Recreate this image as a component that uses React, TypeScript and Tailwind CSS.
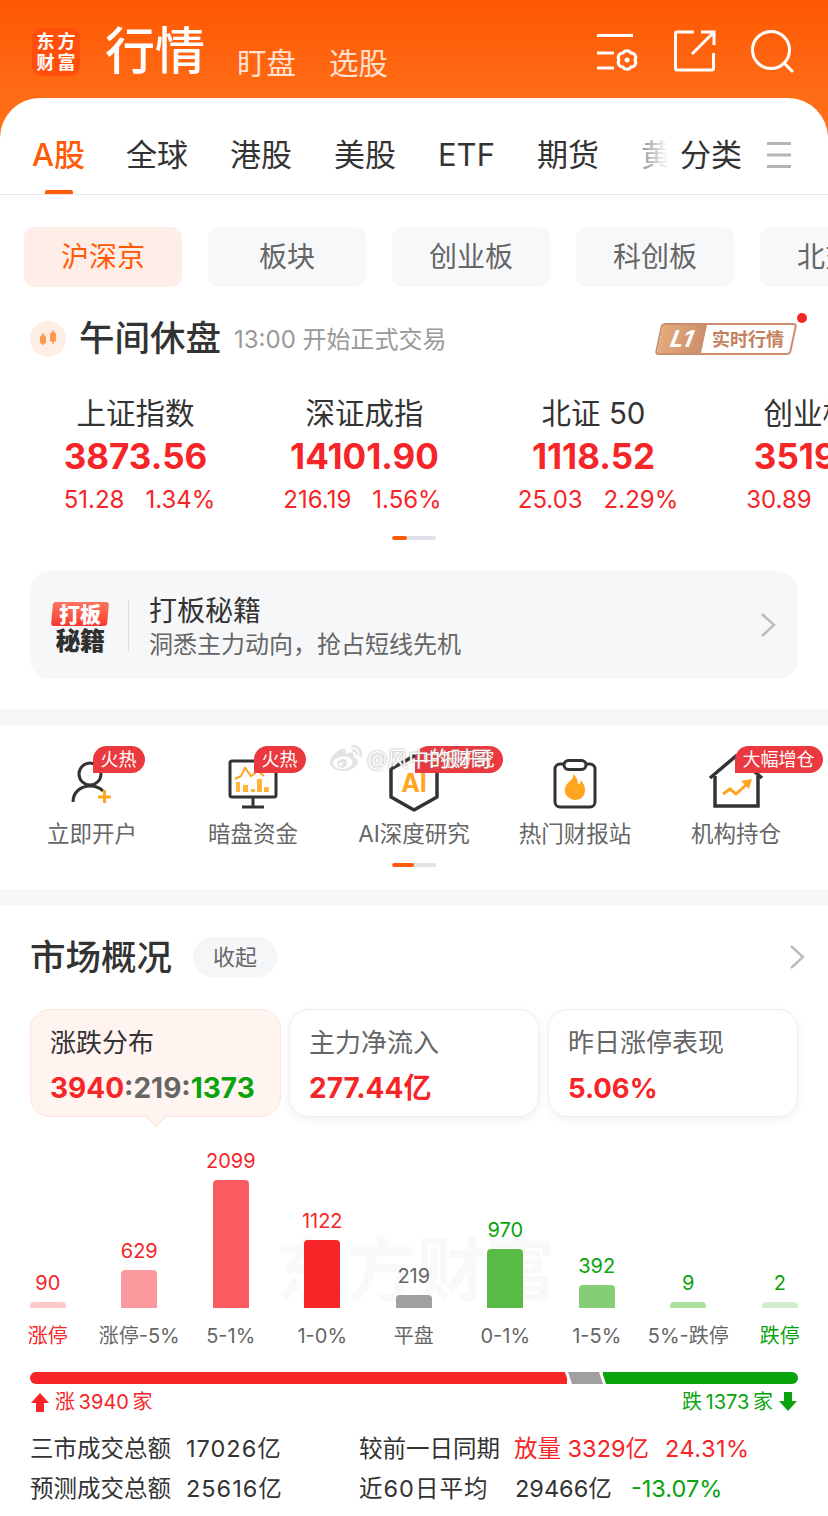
import { FaWeibo } from 'react-icons/fa'

const tabs = ['全球', '港股', '美股', 'ETF', '期货', '黄金']
const chips = ['板块', '创业板', '科创板', '北交所']

const indices = [
  { name: '上证指数', value: '3873.56', change: '51.28', pct: '1.34%', offset: 'pl-[8px]' },
  { name: '深证成指', value: '14101.90', change: '216.19', pct: '1.56%', offset: 'pr-[4px]' },
  { name: '北证 50', value: '1118.52', change: '25.03', pct: '2.29%', offset: 'pl-[9px]' },
  { name: '创业板指', value: '3519.32', change: '30.89', pct: '0.88%', offset: 'pl-[8px]' },
]

const bars = [
  { value: '90', label: '涨停', height: 6, color: '#fdc8ca', text: 'text-[#f52528]', labelColor: 'text-[#f52528]' },
  { value: '629', label: '涨停-5%', height: 38, color: '#fb9a9e', text: 'text-[#f52528]', labelColor: 'text-[#666]' },
  { value: '2099', label: '5-1%', height: 128, color: '#fb5c62', text: 'text-[#f52528]', labelColor: 'text-[#666]' },
  { value: '1122', label: '1-0%', height: 68, color: '#f52528', text: 'text-[#f52528]', labelColor: 'text-[#666]' },
  { value: '219', label: '平盘', height: 13, color: '#a0a0a0', text: 'text-[#666]', labelColor: 'text-[#666]' },
  { value: '970', label: '0-1%', height: 59, color: '#5abb46', text: 'text-[#09a30d]', labelColor: 'text-[#666]' },
  { value: '392', label: '1-5%', height: 23, color: '#85ce75', text: 'text-[#09a30d]', labelColor: 'text-[#666]' },
  { value: '9', label: '5%-跌停', height: 6, color: '#aadfa0', text: 'text-[#09a30d]', labelColor: 'text-[#666]' },
  { value: '2', label: '跌停', height: 6, color: '#d0eecb', text: 'text-[#09a30d]', labelColor: 'text-[#09a30d]' },
]

const Chevron = () => (
  <svg width="18" height="26" viewBox="0 0 18 26" fill="none" stroke="#bbbcc0" strokeWidth="2.4">
    <path d="M3 2l12 11L3 24" />
  </svg>
)

const Badge = ({ text }: { text: string }) => (
  <span className="absolute top-[21px] flex h-[27px] items-center rounded-r-full rounded-tl-full bg-[#ea3a3f] px-[8px] text-[18px] leading-none whitespace-nowrap text-white">
    {text}
  </span>
)

const QuickItem = ({ label, badge, left, children }: { label: string; badge: string; left: string; children: React.ReactNode }) => (
  <div className="relative flex w-[161px] shrink-0 flex-col items-center">
    <div className="mt-[24px] flex h-[60px] items-end justify-center">{children}</div>
    <span className="mt-[9px] text-[22.5px] leading-[32px] whitespace-nowrap text-[#666]">{label}</span>
    <div className={left}>
      <Badge text={badge} />
    </div>
  </div>
)

const StatCard = ({ label, children }: { label: string; children: React.ReactNode }) => (
  <div className="h-[108px] w-[250px] rounded-[20px] border border-[#eeeeee] bg-white pt-[17px] pl-[19px] shadow-[0_3px_10px_rgba(0,0,0,0.06)]">
    <p className="text-[26px] leading-[32px] text-[#666]">{label}</p>
    {children}
  </div>
)

export default function App() {
  return (
    <div className="h-[1516px] w-[828px] overflow-hidden bg-white font-['Inter','Noto_Sans_CJK_SC',sans-serif] text-[#333]">
      <div className="bg-gradient-to-b from-[#ff5803] to-[#ff7d22]">
        <header className="flex h-[98px] items-start pl-[32px]">
          <div className="mt-[28px] grid h-[48px] w-[48px] grid-cols-2 place-items-center rounded-[10px] bg-[#ff4f0a] px-[3px] py-[3px] text-[18px] leading-[20px] font-bold text-white">
            <span>东</span>
            <span>方</span>
            <span>财</span>
            <span>富</span>
          </div>
          <h1 className="mt-[19px] ml-[25px] text-[50px] leading-[64px] font-medium text-white">行情</h1>
          <span className="mt-[44px] ml-[32px] text-[29.5px] leading-[38px] text-white/80">盯盘</span>
          <span className="mt-[44px] ml-[33px] text-[29.5px] leading-[38px] text-white/80">选股</span>
          <div className="ml-auto flex items-start">
            <svg className="mt-[31px]" width="46" height="44" viewBox="0 0 46 44" fill="none" stroke="#fff" strokeWidth="3">
              <path d="M1 4.500h36M1 22h17M1 37h17" />
              <path d="M39 29a4.500 4.500 0 0 1-4 6.930a4.500 4.500 0 0 1-8 0a4.500 4.500 0 0 1-4-6.930a4.500 4.500 0 0 1 4-6.930a4.500 4.500 0 0 1 8 0a4.500 4.500 0 0 1 4 6.930z" />
              <circle cx="31" cy="29" r="2.500" fill="#fff" stroke="none" />
            </svg>
            <svg className="mt-[30px] ml-[32px]" width="42" height="42" viewBox="0 0 42 42" fill="none" stroke="#fff" strokeWidth="3">
              <path d="M20 2H3a1.500 1.500 0 0 0-1.500 1.500v35A1.500 1.500 0 0 0 3 40h35a1.500 1.500 0 0 0 1.500-1.500V23" />
              <path d="M27 2h13v13M39.500 2.500L18 24" />
            </svg>
            <svg className="mt-[30px] mr-[33px] ml-[35px]" width="44" height="44" viewBox="0 0 44 44" fill="none" stroke="#fff" strokeWidth="3">
              <circle cx="20" cy="20" r="18.500" />
              <path d="M33 33l9 9" />
            </svg>
          </div>
        </header>

        <nav className="relative h-[96px] overflow-hidden rounded-t-[40px] bg-white">
          <div className="flex gap-[42px] pt-[36px] pl-[32px] text-[31px] leading-[42px] whitespace-nowrap">
            <span className="mr-[-1px] font-medium text-[#ff5a05]">A股</span>
            {tabs.map((tab) => (
              <span key={tab}>{tab}</span>
            ))}
          </div>
          <div className="absolute bottom-0 left-[45px] h-[4px] w-[28px] rounded-t-[2px] bg-[#ff5a05]" />
          <div className="absolute top-[36px] right-0 flex h-[42px] w-[190px] items-center bg-gradient-to-r from-white/40 via-white via-[16%] to-white pl-[42px] text-[31px]">
            <span>分类</span>
            <svg className="ml-[25px]" width="24" height="26" viewBox="0 0 24 26" fill="#b5b5b5">
              <rect y="0" width="24" height="3" />
              <rect y="11.500" width="24" height="3" />
              <rect y="23" width="24" height="3" />
            </svg>
          </div>
        </nav>
      </div>
      <div className="h-px bg-[#e5e5e5]" />

      <div className="flex gap-[26px] overflow-hidden pt-[32px] pl-[24px] text-[28px] leading-[60px] whitespace-nowrap">
        <div className="h-[60px] w-[158px] shrink-0 rounded-[10px] bg-[#ffeee8] text-center text-[#ff5a05]">沪深京</div>
        {chips.map((chip) => (
          <div key={chip} className="h-[60px] w-[158px] shrink-0 rounded-[10px] bg-[#f7f8fa] text-center text-[#666]">
            {chip}
          </div>
        ))}
      </div>

      <section className="relative mt-[24px] flex h-[56px] items-center pl-[30px]">
        <div className="flex h-[36px] w-[36px] items-center justify-center rounded-full bg-[#ffeee4]">
          <svg width="20" height="24" viewBox="0 0 20 24">
            <path d="M5 6v12" stroke="#f9a062" strokeWidth="1.500" />
            <path d="M15 3v14" stroke="#f9a062" strokeWidth="1.500" />
            <rect x="2" y="8" width="6" height="9" rx="2.500" fill="#fb9a50" />
            <rect x="12" y="5" width="6" height="10" rx="2.500" fill="#fb9a50" />
          </svg>
        </div>
        <h2 className="ml-[13px] text-[35.5px] leading-[44px] font-medium">午间休盘</h2>
        <span className="ml-[13px] pt-[2px] text-[24px] text-[#999]">13:00 开始正式交易</span>
        <div className="relative mr-[34px] ml-auto flex h-[32px] w-[136px] -skew-x-[12deg] overflow-hidden rounded-[4px] border-2 border-[#cd8d6c] bg-white">
          <div className="flex w-[44px] items-center justify-center bg-gradient-to-r from-[#e3aa7b] to-[#cc8f6d]">
            <span className="text-[23px] leading-none font-bold text-white italic">L1</span>
          </div>
          <span className="flex flex-1 skew-x-[12deg] items-center justify-center text-[18px] font-bold whitespace-nowrap text-[#c37f60]">实时行情</span>
        </div>
        <div className="absolute top-[2px] right-[21px] h-[10px] w-[10px] rounded-full bg-[#f52528]" />
      </section>

      <div className="mt-[26px] flex overflow-hidden pl-[21px] whitespace-nowrap">
        {indices.map((item) => (
          <div key={item.name} className="flex w-[229px] shrink-0 flex-col items-center">
            <p className="text-[29.5px] leading-[40px]">{item.name}</p>
            <p className="mt-[1px] text-[35px] leading-[44px] font-bold text-[#f52528]">{item.value}</p>
            <p className={`mt-[7px] flex gap-[21px] text-[24px] leading-[30px] text-[#f52528] ${item.offset}`}>
              <span>{item.change}</span>
              <span>{item.pct}</span>
            </p>
          </div>
        ))}
      </div>

      <div className="mx-auto mt-[21px] h-[4px] w-[44px] overflow-hidden rounded-full bg-[#dfe1e6]">
        <div className="h-full w-[15px] rounded-full bg-[#ff5a05]" />
      </div>

      <div className="mx-[30px] mt-[31px] flex h-[108px] items-center rounded-[20px] bg-[#f6f7f9] pl-[22px]">
        <div className="flex w-[56px] flex-col items-center pt-[5px]">
          <div className="flex h-[24px] w-[56px] -skew-x-[5deg] items-center justify-center rounded-[3px] bg-gradient-to-b from-[#fb7560] to-[#f9352f]">
            <span className="skew-x-[5deg] text-[21px] leading-none font-black text-white">打板</span>
          </div>
          <span className="mt-[2px] text-[25px] leading-[26px] font-black tracking-tight text-[#2f2f2f]">秘籍</span>
        </div>
        <div className="mx-[20px] h-[52px] w-px bg-[#dedede]" />
        <div className="pt-[4px]">
          <p className="text-[28px] leading-[36px]">打板秘籍</p>
          <p className="text-[24px] leading-[32px] text-[#666]">洞悉主力动向，抢占短线先机</p>
        </div>
        <div className="mr-[21px] ml-auto">
          <Chevron />
        </div>
      </div>

      <div className="mt-[30px] h-[16px] bg-[#f6f7f9]" />

      <div className="relative h-[164px]">
        <div className="flex pl-[11.5px]">
          <QuickItem label="立即开户" badge="火热" left="absolute top-0 left-[81px]">
            <svg className="mb-[4px]" width="42" height="44" viewBox="0 0 42 44" fill="none">
              <circle cx="19" cy="13" r="11" stroke="#333" strokeWidth="3" />
              <path d="M2 41c0-10 8-16 17-16 5 0 10 2 13 5" stroke="#333" strokeWidth="3" />
              <path d="M27 36h13M33.500 29v13" stroke="#ffa51f" strokeWidth="3" />
            </svg>
          </QuickItem>
          <QuickItem label="暗盘资金" badge="火热" left="absolute top-0 left-[81px]">
            <svg width="50" height="50" viewBox="0 0 50 50" fill="none">
              <rect x="2" y="2" width="46" height="36" rx="2" stroke="#333" strokeWidth="3" />
              <path d="M14 48h22M25 38v10" stroke="#333" strokeWidth="3" />
              <path d="M7 20l6-3 4-8 6 8 7-5 6 5" stroke="#ffa51f" strokeWidth="2" />
              <path d="M8 33V23h4v10zM15 33v-7h5v7zM23 33v-3h4v3zM29 33V20h5v13zM36 33v-5h5v5z" fill="#ffb43a" />
            </svg>
          </QuickItem>
          <QuickItem label="AI深度研究" badge="中报研究" left="absolute top-0 left-[81px]">
            <div className="relative mb-[-3px] flex h-[58px] w-[52px] items-center justify-center">
              <svg className="absolute inset-0" width="52" height="58" viewBox="0 0 52 58" fill="none">
                <path d="M26 2l23 13v28L26 56 3 43V15z" stroke="#333" strokeWidth="3.500" strokeLinejoin="round" />
              </svg>
              <span className="relative text-[25px] leading-none font-bold text-[#ffa51f]">AI</span>
            </div>
          </QuickItem>
          <QuickItem label="热门财报站" badge="" left="hidden">
            <svg width="44" height="50" viewBox="0 0 44 50" fill="none">
              <rect x="2" y="5" width="40" height="43" rx="5" stroke="#333" strokeWidth="3" />
              <rect x="11" y="1.500" width="22" height="9" rx="4.500" fill="#fff" stroke="#333" strokeWidth="3" />
              <path d="M20 15c1 5-3 6-6 10-3 4-3 10 1 13 2 2 5 3 7 3 6 0 10-4 10-10 0-4-2-7-4-10 0 2-1 4-3 4 0-4-2-8-5-10z" fill="#ffa51f" />
            </svg>
          </QuickItem>
          <QuickItem label="机构持仓" badge="大幅增仓" left="absolute top-0 left-[79px]">
            <svg width="56" height="56" viewBox="0 0 56 56" fill="none">
              <path d="M2 25L28 3l26 22" stroke="#333" strokeWidth="3.500" />
              <path d="M7 23v30h43V23" stroke="#333" strokeWidth="3.500" />
              <path d="M15 41l7-5 6 5 11-10" stroke="#ffa51f" strokeWidth="3" />
              <path d="M33 28l11-2-3 10z" fill="#ffa51f" />
            </svg>
          </QuickItem>
        </div>
        <div className="mx-auto mt-[13px] h-[4px] w-[44px] overflow-hidden rounded-full bg-[#dfe1e6]">
          <div className="h-full w-[22px] rounded-full bg-[#ff5a05]" />
        </div>
        {/* weibo watermark */}
        <div className="absolute top-[18px] left-[330px] flex items-center text-[21px] leading-[30px] text-white [text-shadow:0_0_2px_#888]">
          <FaWeibo className="mr-[5px] h-[32px] w-[32px] text-[#e3e3e3]" />
          <span>@风中的财哥</span>
        </div>
      </div>

      <div className="h-[16px] bg-[#f6f7f9]" />

      <div className="mt-[32px] flex h-[40px] items-center pr-[22px] pl-[30px]">
        <h2 className="pt-[1px] text-[35.5px] leading-[40px] font-medium">市场概况</h2>
        <span className="ml-[21px] flex h-[40px] w-[84px] items-center justify-center rounded-full bg-[#f5f6f8] text-[22px] text-[#666]">收起</span>
        <div className="ml-auto">
          <Chevron />
        </div>
      </div>

      <div className="mt-[32px] flex gap-[8px] pl-[30px]">
        <div className="relative h-[108px] w-[251px] rounded-[20px] border border-[#fde5dc] bg-[#fff4f0] pt-[17px] pl-[19px]">
          <p className="text-[26px] leading-[32px]">涨跌分布</p>
          <p className="mt-[13px] text-[28px] leading-[32px] font-bold">
            <span className="text-[#f52528]">3940</span>
            <span className="text-[#666]">:219:</span>
            <span className="text-[#09a30d]">1373</span>
          </p>
          <div className="absolute -bottom-[8px] left-[118px] h-[14px] w-[14px] rotate-45 border-r border-b border-[#fde5dc] bg-[#fff4f0]" />
        </div>
        <StatCard label="主力净流入">
          <p className="mt-[13px] text-[28px] leading-[32px] font-bold text-[#f52528]">277.44亿</p>
        </StatCard>
        <div className="ml-[1px]">
          <StatCard label="昨日涨停表现">
            <p className="mt-[13px] text-[27.5px] leading-[32px] font-bold text-[#f52528]">5.06%</p>
          </StatCard>
        </div>
      </div>

      <div className="relative mt-[28px] flex h-[227px] items-start pl-[2px]">
        <span className="absolute top-[86px] left-[276px] text-[70px] leading-[80px] font-bold whitespace-nowrap text-[#f9f9f9]">东方财富</span>
        {bars.map((bar) => (
          <div key={bar.label} className="relative flex w-[91.5px] flex-col items-center">
            <div className="flex h-[163px] flex-col items-center justify-end">
              <span className={`text-[20px] leading-[26px] ${bar.text}`}>{bar.value}</span>
              <div className="mt-[6px] w-[36px] rounded-t-[4px]" style={{ height: bar.height, backgroundColor: bar.color }} />
            </div>
            <span className={`mt-[14px] text-[20px] leading-[28px] whitespace-nowrap ${bar.labelColor}`}>{bar.label}</span>
          </div>
        ))}
      </div>

      <div className="mx-[30px] flex h-[12px] overflow-hidden rounded-full">
        <div className="w-[537px] bg-[#f52528]" />
        <div className="relative z-10 w-[37px] skew-x-[18deg] border-x-[3px] border-white bg-[#a0a0a0]" />
        <div className="ml-[-1px] flex-1 bg-[#09a30d]" />
      </div>

      <div className="mt-[4px] flex h-[28px] items-center justify-between px-[30px] text-[20px] [word-spacing:-2px]">
        <span className="flex items-center text-[#f52528]">
          <svg className="mr-[5px]" width="20" height="20" viewBox="0 0 20 20" fill="#f52528">
            <path d="M10 1l9 10h-5v9H6v-9H1z" />
          </svg>
          涨 3940 家
        </span>
        <span className="flex items-center text-[#09a30d]">
          跌 1373 家
          <svg className="ml-[5px]" width="20" height="20" viewBox="0 0 20 20" fill="#09a30d">
            <path d="M6 0h8v9h5l-9 10L1 9h5z" />
          </svg>
        </span>
      </div>

      <div className="mt-[13px] pl-[30px] text-[23.5px] leading-[40px] whitespace-nowrap">
        <div className="flex">
          <span className="w-[156px]">三市成交总额</span>
          <span className="w-[173px] tracking-[1px]">17026亿</span>
          <span className="w-[155px]">较前一日同期</span>
          <span className="w-[151px] text-[#f52528]">放量 3329亿</span>
          <span className="tracking-[0.5px] text-[#f52528]">24.31%</span>
        </div>
        <div className="flex">
          <span className="w-[156px]">预测成交总额</span>
          <span className="w-[173px] tracking-[1px]">25616亿</span>
          <span className="w-[156px] tracking-[1px]">近60日平均</span>
          <span className="w-[116px]">29466亿</span>
          <span className="text-[#09a30d]">-13.07%</span>
        </div>
      </div>
    </div>
  )
}
